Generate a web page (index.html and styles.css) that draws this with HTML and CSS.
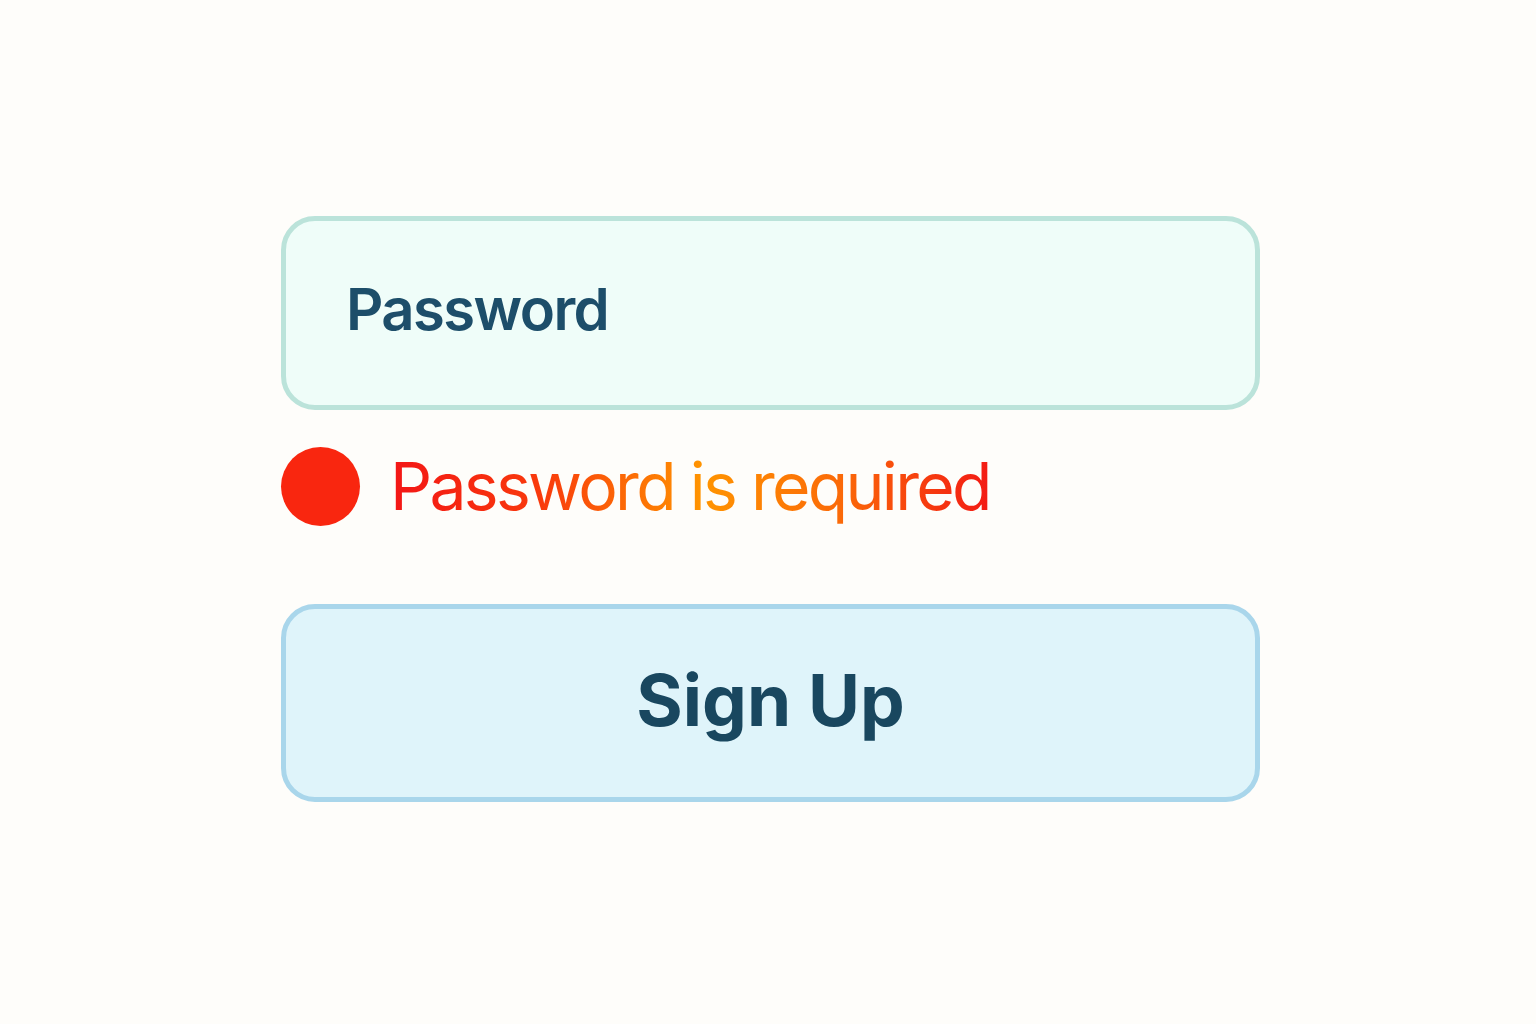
FILE: index.html
```html
<!DOCTYPE html>
<html lang="en">
<head>
<meta charset="utf-8">
<title>Sign Up</title>
<link rel="stylesheet" href="styles.css">
</head>
<body>
<main class="form">
  <div class="field">
    <span class="placeholder">Password</span>
  </div>
  <div class="error">
    <span class="dot"></span>
    <span class="error-text">Password is required</span>
  </div>
  <button class="submit" type="button">Sign Up</button>
</main>
</body>
</html>
```
FILE: styles.css
```css
html, body {
  margin: 0;
  padding: 0;
  background: #fefdfa;
  height: 100%;
}
body {
  font-family: Inter, "Noto Sans", "Liberation Sans", sans-serif;
}
.form {
  width: 979px;
  padding: 216px 0 0 281px;
  display: flex;
  flex-direction: column;
}
.field {
  box-sizing: border-box;
  height: 194px;
  border: 5px solid #bbe3da;
  border-radius: 34px;
  background: #effdf9;
  display: flex;
  align-items: center;
  padding-left: 60px;
}
.placeholder {
  font-size: 58px;
  font-weight: 600;
  color: #1d4e6a;
  letter-spacing: -1.6px;
  margin-top: -8px;
}
.error {
  margin-top: 37px;
  height: 79px;
  display: flex;
  align-items: center;
  gap: 30px;
}
.dot {
  width: 79px;
  height: 79px;
  border-radius: 50%;
  background: #f9260f;
  flex: none;
}
.error-text {
  font-size: 66px;
  font-weight: 400;
  letter-spacing: -2.7px;
  background: linear-gradient(90deg, #f31616 0%, #f93a0c 25%, #ff9400 52%, #fb6a08 75%, #f31a14 100%);
  -webkit-background-clip: text;
  background-clip: text;
  color: transparent;
  margin-top: -2px;
}
.submit {
  margin-top: 78px;
  box-sizing: border-box;
  height: 198px;
  border: 5px solid #a9d6eb;
  border-radius: 34px;
  background: #dff4fa;
  font-family: inherit;
  font-size: 71px;
  font-weight: 700;
  color: #19475f;
  padding: 0 0 6px;
  cursor: pointer;
}
```
